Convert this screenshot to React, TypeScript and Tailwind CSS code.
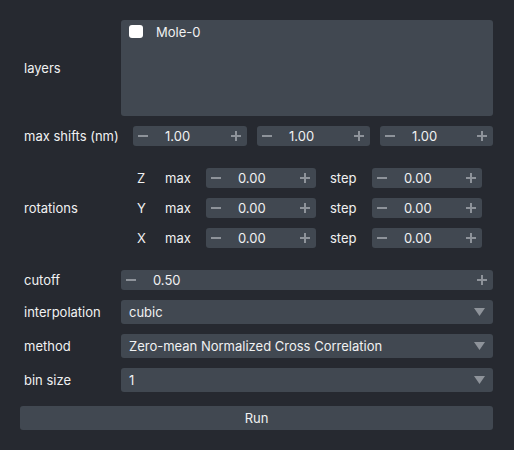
import React from 'react';

const Minus = () => <div className="w-[10px] h-[2px] bg-[#8e939a]" />;
const Plus = () => (
  <div className="relative w-[10px] h-[10px]">
    <div className="absolute left-0 top-[4px] w-[10px] h-[2px] bg-[#8e939a]" />
    <div className="absolute left-[4px] top-0 w-[2px] h-[10px] bg-[#8e939a]" />
  </div>
);

// text sits a pixel lower in the reference than Inter's default box
const T = ({ children, className = '' }: { children: React.ReactNode; className?: string }) => (
  <span className={`relative top-[1px] ${className}`}>{children}</span>
);

function SpinBox({ value, className }: { value: string; className: string }) {
  return (
    <div className={`flex items-center h-[20px] rounded-[3px] bg-[#414851] ${className}`}>
      <div className="w-[32px] pl-[5px] flex items-center">
        <Minus />
      </div>
      <T className="flex-1">{value}</T>
      <div className="pr-[6px] flex items-center">
        <Plus />
      </div>
    </div>
  );
}

function Select({ value }: { value: string }) {
  return (
    <div className="flex items-center flex-1 h-[24px] rounded-[3px] bg-[#414851] pl-[8px] pr-[8px]">
      <T className="flex-1">{value}</T>
      <svg width="11" height="8" viewBox="0 0 11 8">
        <polygon points="0,0 11,0 5.5,8" fill="#8e939a" />
      </svg>
    </div>
  );
}

const Label = ({ children, w = 'w-[101px]' }: { children: React.ReactNode; w?: string }) => (
  <div className={`${w} pl-[4px] shrink-0`}>
    <T>{children}</T>
  </div>
);

export default function App() {
  const rot = ['Z', 'Y', 'X'];
  return (
    <div
      className="w-[514px] h-[450px] bg-[#262930] text-[#f0f1f2] text-[13px] pl-[20px] pr-[21px] pt-[20px]"
      style={{ fontFamily: 'Inter, "Noto Sans", sans-serif' }}
    >
      <div className="flex items-center">
        <Label>layers</Label>
        <div className="flex-1 h-[96px] rounded-[3px] bg-[#414851] pt-[5px] pl-[8px]">
          <div className="flex items-center h-[13px]">
            <div className="w-[14px] h-[13px] rounded-[3px] bg-white" />
            <T className="ml-[13px]">Mole-0</T>
          </div>
        </div>
      </div>

      <div className="flex items-center mt-[10px]">
        <Label w="w-[113px]">max shifts (nm)</Label>
        <div className="flex-1 flex gap-[10px]">
          <SpinBox value="1.00" className="w-[114px]" />
          <SpinBox value="1.00" className="w-[113px]" />
          <SpinBox value="1.00" className="w-[113px]" />
        </div>
      </div>

      <div className="flex items-center mt-[22px]">
        <Label w="w-[117px]">rotations</Label>
        <div className="flex flex-col gap-[10px]">
          {rot.map((r) => (
            <div key={r} className="flex items-center">
              <T className="w-[28px]">{r}</T>
              <T className="w-[41px]">max</T>
              <SpinBox value="0.00" className="w-[110px]" />
              <T className="ml-[14px] w-[42px]">step</T>
              <SpinBox value="0.00" className="w-[110px]" />
            </div>
          ))}
        </div>
      </div>

      <div className="flex items-center mt-[22px]">
        <Label>cutoff</Label>
        <SpinBox value="0.50" className="flex-1" />
      </div>

      <div className="flex items-center mt-[10px]">
        <Label>interpolation</Label>
        <Select value="cubic" />
      </div>
      <div className="flex items-center mt-[10px]">
        <Label>method</Label>
        <Select value="Zero-mean Normalized Cross Correlation" />
      </div>
      <div className="flex items-center mt-[10px]">
        <Label>bin size</Label>
        <Select value="1" />
      </div>

      <div className="mt-[14px] h-[24px] rounded-[3px] bg-[#414851] flex items-center justify-center">
        <T>Run</T>
      </div>
    </div>
  );
}
